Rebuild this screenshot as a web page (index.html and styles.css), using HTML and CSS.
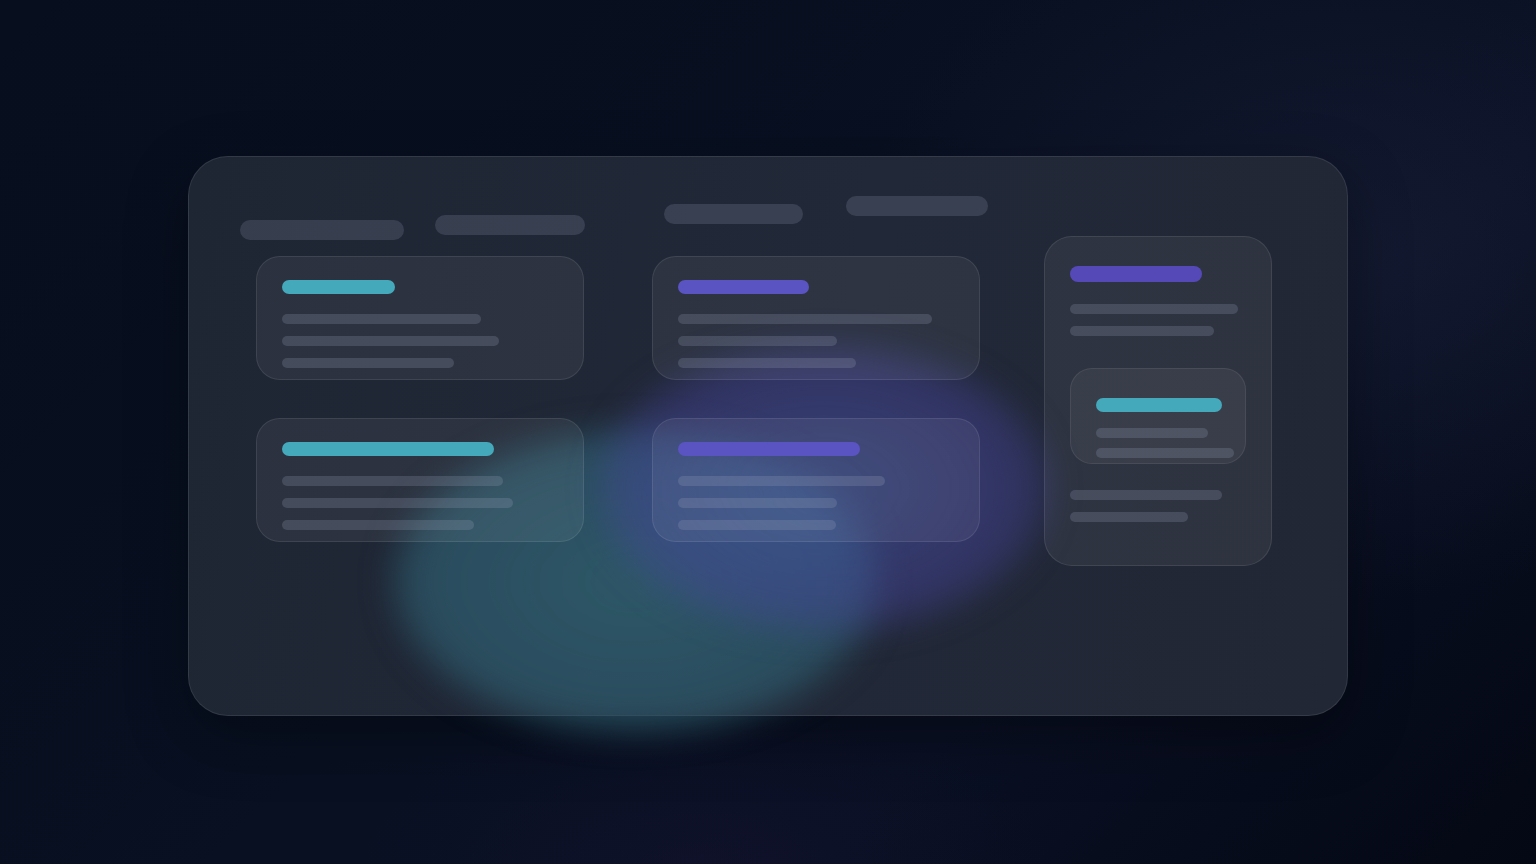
FILE: index.html
```html
<!DOCTYPE html>
<html lang="en">
<head>
<meta charset="utf-8">
<title>Board</title>
<link rel="stylesheet" href="styles.css">
</head>
<body>
<div class="panel">
  <div class="blob blob-teal"></div>
  <div class="blob blob-violet"></div>
  <div class="layout">
    <div class="left">
      <div class="header">
        <div class="pill p1"></div>
        <div class="pill p2"></div>
        <div class="pill p3"></div>
        <div class="pill p4"></div>
      </div>
      <div class="grid">
        <div class="card">
          <div class="title cyan" style="width:113px"></div>
          <div class="lines">
            <div class="line" style="width:199px"></div>
            <div class="line" style="width:217px"></div>
            <div class="line" style="width:172px"></div>
          </div>
        </div>
        <div class="card">
          <div class="title violet" style="width:131px"></div>
          <div class="lines">
            <div class="line" style="width:254px"></div>
            <div class="line" style="width:159px"></div>
            <div class="line" style="width:178px"></div>
          </div>
        </div>
        <div class="card">
          <div class="title cyan" style="width:212px"></div>
          <div class="lines">
            <div class="line" style="width:221px"></div>
            <div class="line" style="width:231px"></div>
            <div class="line" style="width:192px"></div>
          </div>
        </div>
        <div class="card">
          <div class="title violet" style="width:182px"></div>
          <div class="lines">
            <div class="line" style="width:207px"></div>
            <div class="line" style="width:159px"></div>
            <div class="line" style="width:158px"></div>
          </div>
        </div>
      </div>
    </div>
    <div class="side">
      <div class="side-title violet"></div>
      <div class="lines">
        <div class="line" style="width:168px"></div>
        <div class="line" style="width:144px"></div>
      </div>
      <div class="inner">
        <div class="inner-title cyan"></div>
        <div class="inner-lines">
          <div class="line" style="width:112px"></div>
          <div class="line" style="width:138px"></div>
        </div>
      </div>
      <div class="lines">
        <div class="line" style="width:152px"></div>
        <div class="line" style="width:118px"></div>
      </div>
    </div>
  </div>
</div>
</body>
</html>
```

FILE: styles.css
```css
* { box-sizing: border-box; }
html, body { margin: 0; padding: 0; }
body {
  width: 1536px;
  height: 864px;
  overflow: hidden;
  font-family: "Inter", "Liberation Sans", sans-serif;
  background:
    radial-gradient(ellipse 700px 500px at 1350px 250px, rgba(30, 36, 62, 0.45), transparent 70%),
    radial-gradient(ellipse 500px 220px at 700px 864px, rgba(24, 20, 52, 0.35), transparent 70%),
    linear-gradient(135deg, #070e1d 0%, #081021 45%, #0a1024 70%, #040814 100%);
}
.panel {
  position: relative;
  width: 1160px;
  height: 560px;
  margin: 156px auto 0;
  border-radius: 40px;
  border: 1px solid rgba(255, 255, 255, 0.09);
  background: linear-gradient(100deg, #1e2533 0%, #212837 55%, #222735 100%);
  box-shadow: 0 20px 60px rgba(0, 0, 0, 0.35);
}
.blob {
  position: absolute;
  border-radius: 50%;
  pointer-events: none;
}
.blob-teal {
  left: 204px;
  top: 272px;
  width: 484px;
  height: 305px;
  background: radial-gradient(ellipse at center, rgba(48, 96, 112, 0.85) 0%, rgba(46, 90, 108, 0.75) 60%, rgba(40, 80, 100, 0) 100%);
  filter: blur(16px);
}
.blob-violet {
  left: 410px;
  top: 186px;
  width: 450px;
  height: 290px;
  background: radial-gradient(ellipse at center, rgba(70, 90, 170, 0.55) 0%, rgba(72, 70, 160, 0.45) 55%, rgba(70, 60, 150, 0) 100%);
  filter: blur(16px);
}
.layout {
  position: relative;
  display: flex;
  padding: 39px 0 0 51px;
  gap: 64px;
}
.left { width: 740px; flex-shrink: 0; }
.header {
  display: flex;
  align-items: flex-start;
  height: 44px;
}
.pill {
  flex-shrink: 0;
  height: 20px;
  border-radius: 10px;
  background: rgba(120, 130, 150, 0.28);
}
.p1 { width: 164px; margin-top: 24px; }
.p2 { width: 150px; margin-top: 19px; margin-left: 31px; }
.p3 { width: 139px; margin-top: 8px; margin-left: 79px; }
.p4 { width: 142px; margin-top: 0; margin-left: 43px; }
.grid {
  display: grid;
  grid-template-columns: 328px 328px;
  grid-auto-rows: 124px;
  column-gap: 68px;
  row-gap: 38px;
  margin-top: 16px;
  padding-left: 16px;
}
.card {
  border-radius: 24px;
  border: 1px solid rgba(255, 255, 255, 0.09);
  background: rgba(255, 255, 255, 0.06);
  padding: 23px 25px;
}
.title {
  height: 14px;
  border-radius: 7px;
}
.cyan { background: #43a9bb; }
.violet { background: #5a53c2; }
.lines {
  display: flex;
  flex-direction: column;
  gap: 12px;
  margin-top: 20px;
}
.line {
  height: 10px;
  border-radius: 5px;
  background: rgba(160, 170, 190, 0.22);
}
.side {
  flex-shrink: 0;
  width: 228px;
  height: 330px;
  margin-top: 40px;
  border-radius: 28px;
  border: 1px solid rgba(255, 255, 255, 0.09);
  background: rgba(255, 255, 255, 0.06);
  padding: 29px 25px;
}
.side-title {
  width: 132px;
  height: 16px;
  border-radius: 8px;
  background: #5549b8;
}
.side .lines { margin-top: 22px; }
.inner {
  width: 176px;
  height: 96px;
  margin-top: 32px;
  border-radius: 22px;
  border: 1px solid rgba(255, 255, 255, 0.08);
  background: rgba(255, 255, 255, 0.05);
  padding: 29px 0 0 25px;
}
.inner-title {
  width: 126px;
  height: 14px;
  border-radius: 7px;
}
.inner-lines {
  display: flex;
  flex-direction: column;
  gap: 10px;
  margin-top: 16px;
}
.inner + .lines { margin-top: 26px; }
```
